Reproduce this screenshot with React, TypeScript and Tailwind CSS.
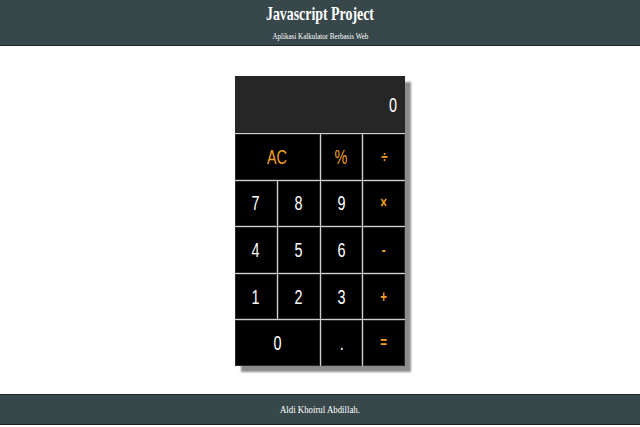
const serif = "font-['Liberation_Serif','Times_New_Roman',serif]";
const sans = "font-['Liberation_Sans',Arial,sans-serif]";

type Key = { label: string; span?: boolean; op?: boolean };

const keys: Key[] = [
  { label: "AC", span: true, op: true },
  { label: "%", op: true },
  { label: "÷", op: true },
  { label: "7" },
  { label: "8" },
  { label: "9" },
  { label: "×", op: true },
  { label: "4" },
  { label: "5" },
  { label: "6" },
  { label: "-", op: true },
  { label: "1" },
  { label: "2" },
  { label: "3" },
  { label: "+", op: true },
  { label: "0", span: true },
  { label: "." },
  { label: "=", op: true },
];

export default function App() {
  return (
    <div className="w-[640px] h-[427px] bg-white flex flex-col overflow-hidden">
      {/* Header */}
      <header className="h-[46px] bg-[#37474a] border-b border-[#1c2426] flex flex-col items-center">
        <h1 className={`${serif} text-white font-bold text-[19px] leading-[22px] mt-[3px] inline-block scale-x-[0.73]`}>
          Javascript Project
        </h1>
        <p className={`${serif} text-white text-[9px] leading-[10px] mt-[6px] inline-block scale-x-[0.78]`}>
          Aplikasi Kalkulator Berbasis Web
        </p>
      </header>

      {/* Calculator */}
      <main className="flex-1 flex justify-center pt-[30px]">
        <div className="w-[170px] h-[290px] bg-[#cfcfcf] flex flex-col shadow-[6px_6px_2px_rgba(0,0,0,0.45)]">
          <div className={`${sans} h-[57px] bg-[#262626] text-white text-[20px] flex items-center justify-end pr-[8px]`}>
            <span className="inline-block scale-x-[0.72] origin-right">0</span>
          </div>
          <div className="flex-1 grid grid-cols-4 grid-rows-5 gap-[1px] pt-[1px]">
            {keys.map((k) => (
              <button
                key={k.label}
                className={`${sans} ${k.span ? "col-span-2" : ""} ${
                  k.op ? "text-[#f0a020] font-bold" : "text-white"
                } bg-black border border-[#2a2a2a] text-[20px] flex items-center justify-center`}
              >
                <span className={`inline-block scale-x-[0.72] ${k.op && k.label !== "AC" && k.label !== "%" ? "text-[16px]" : ""} ${k.label === "AC" || k.label === "%" ? "font-normal" : ""}`}>
                  {k.label}
                </span>
              </button>
            ))}
          </div>
        </div>
      </main>

      {/* Footer */}
      <footer className="h-[31px] mb-[2px] bg-[#37474a] border-y border-[#1c2426] flex items-center justify-center">
        <span className={`${serif} text-white text-[11px] inline-block scale-x-[0.8]`}>Aldi Khoirul Abdillah.</span>
      </footer>
    </div>
  );
}
